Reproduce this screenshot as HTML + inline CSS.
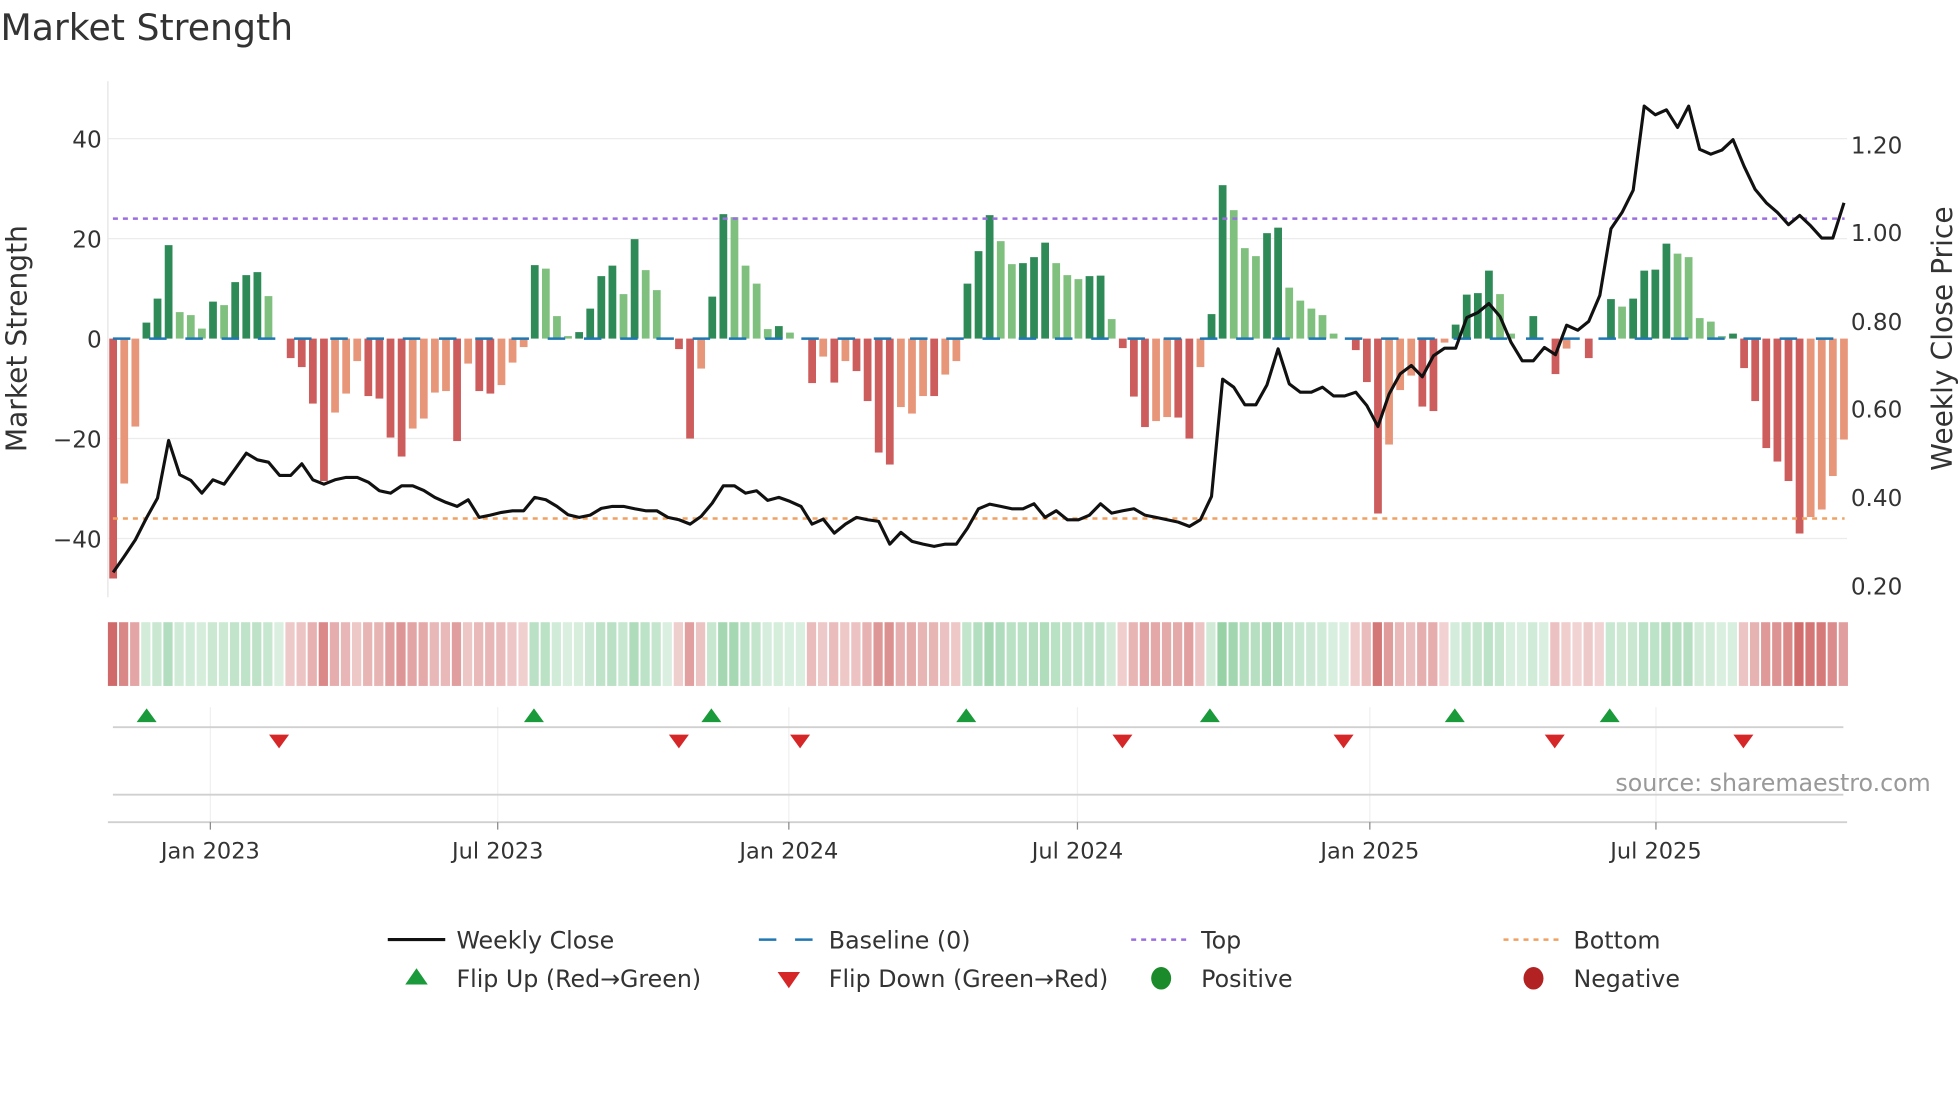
<!DOCTYPE html>
<html><head><meta charset="utf-8"><style>
html,body{margin:0;padding:0;background:#fff;}
svg{display:block;font-family:"DejaVu Sans","Liberation Sans",sans-serif;}
</style></head><body>
<svg id="s" width="1960" height="1102" viewBox="0 0 1568 882" xmlns="http://www.w3.org/2000/svg">
<rect width="1568" height="882" fill="#fff"/>
<text x="0" y="32" font-size="29" fill="#333">Market Strength</text>
<g stroke="#ececec" stroke-width="1">
<line x1="86" y1="111" x2="1478" y2="111"/><line x1="86" y1="191" x2="1478" y2="191"/>
<line x1="86" y1="351" x2="1478" y2="351"/><line x1="86" y1="431" x2="1478" y2="431"/>
</g>
<line x1="86" y1="65" x2="86" y2="478" stroke="#e4e4e4"/>
<g font-size="18.5" fill="#333" text-anchor="end">
<text x="81" y="118">40</text><text x="81" y="198">20</text><text x="81" y="278">0</text>
<text x="81" y="358">−20</text><text x="81" y="438">−40</text>
</g>
<g font-size="18.5" fill="#333">
<text x="1481" y="123">1.20</text><text x="1481" y="193">1.00</text><text x="1481" y="264">0.80</text>
<text x="1481" y="334">0.60</text><text x="1481" y="405">0.40</text><text x="1481" y="476">0.20</text>
</g>
<text transform="translate(21,271) rotate(-90)" font-size="22.5" fill="#333" text-anchor="middle">Market Strength</text>
<text transform="translate(1562,271) rotate(-90)" font-size="22.5" fill="#333" text-anchor="middle">Weekly Close Price</text>
<g id="bars"></g>
<line x1="90" y1="271" x2="1476" y2="271" stroke="#1f77b4" stroke-width="2" stroke-dasharray="14,15"/>
<line x1="90" y1="175" x2="1476" y2="175" stroke="#9b6ee0" stroke-width="2" stroke-dasharray="4,4"/>
<line x1="90" y1="415" x2="1476" y2="415" stroke="#f0a060" stroke-width="2" stroke-dasharray="4,4"/>
<polyline id="price" fill="none" stroke="#111" stroke-width="2.5" stroke-linejoin="round"/>
<g id="strip"></g>
<g stroke="#f0f0f0" stroke-width="1">
<line x1="168" y1="566" x2="168" y2="658"/><line x1="398" y1="566" x2="398" y2="658"/>
<line x1="631" y1="566" x2="631" y2="658"/><line x1="862" y1="566" x2="862" y2="658"/>
<line x1="1096" y1="566" x2="1096" y2="658"/><line x1="1325" y1="566" x2="1325" y2="658"/>
</g>
<line x1="90" y1="582" x2="1475" y2="582" stroke="#d0d0d0" stroke-width="1.5"/>
<line x1="90" y1="636" x2="1475" y2="636" stroke="#d0d0d0" stroke-width="1.5"/>
<line x1="86" y1="658" x2="1478" y2="658" stroke="#d0d0d0" stroke-width="1.5"/>
<g stroke="#888" stroke-width="1">
<line x1="168" y1="658" x2="168" y2="664"/><line x1="398" y1="658" x2="398" y2="664"/>
<line x1="631" y1="658" x2="631" y2="664"/><line x1="862" y1="658" x2="862" y2="664"/>
<line x1="1096" y1="658" x2="1096" y2="664"/><line x1="1325" y1="658" x2="1325" y2="664"/>
</g>
<g id="flips"></g>
<text x="1545" y="633" font-size="19" fill="#999" text-anchor="end">source: sharemaestro.com</text>
<g font-size="18" fill="#333" text-anchor="middle">
<text x="168" y="687">Jan 2023</text><text x="398" y="687">Jul 2023</text><text x="631" y="687">Jan 2024</text>
<text x="862" y="687">Jul 2024</text><text x="1096" y="687">Jan 2025</text><text x="1325" y="687">Jul 2025</text>
</g>
<g font-size="19" fill="#333">
<line x1="310" y1="752" x2="356" y2="752" stroke="#111" stroke-width="2.5"/>
<text x="365" y="759">Weekly Close</text>
<line x1="607" y1="752" x2="651" y2="752" stroke="#1f77b4" stroke-width="2" stroke-dasharray="14,15"/>
<text x="663" y="759">Baseline (0)</text>
<line x1="905" y1="752" x2="949" y2="752" stroke="#9b6ee0" stroke-width="2" stroke-dasharray="4,4"/>
<text x="961" y="759">Top</text>
<line x1="1203" y1="752" x2="1247" y2="752" stroke="#f0a060" stroke-width="2" stroke-dasharray="4,4"/>
<text x="1259" y="759">Bottom</text>
<polygon points="324,788 342,788 333,775" fill="#1a9a3a"/>
<text x="365" y="790">Flip Up (Red→Green)</text>
<polygon points="622,778 640,778 631,791" fill="#d62728"/>
<text x="663" y="790">Flip Down (Green→Red)</text>
<ellipse cx="929" cy="783" rx="8" ry="9" fill="#1a8a2a"/>
<text x="961" y="790">Positive</text>
<ellipse cx="1227" cy="783" rx="8" ry="9" fill="#b22222"/>
<text x="1259" y="790">Negative</text>
</g>
</svg>
<script>
var v=[-48,-29,-17.6,3.2,8,18.7,5.3,4.7,2,7.4,6.7,11.3,12.7,13.3,8.5,0,-3.9,-5.7,-13,-28.5,-14.8,-11,-4.5,-11.5,-12,-19.8,-23.6,-18,-16,-10.8,-10.5,-20.5,-5,-10.5,-11,-9.3,-4.8,-1.7,14.7,14,4.5,0.5,1.3,6,12.5,14.6,8.9,19.9,13.7,9.7,0,-2.1,-20,-6,8.4,24.9,24.3,14.6,11,1.9,2.5,1.2,0,-8.9,-3.6,-8.8,-4.5,-6.5,-12.5,-22.8,-25.2,-13.7,-15,-11.5,-11.5,-7.2,-4.5,11,17.5,24.7,19.5,14.9,15.1,16.3,19.2,15.1,12.7,11.9,12.5,12.6,3.9,-1.9,-11.6,-17.7,-16.5,-15.7,-15.8,-20,-5.7,4.9,30.7,25.7,18.1,16.5,21.1,22.2,10.2,7.6,6,4.7,1,0,-2.3,-8.7,-35,-21.2,-10.3,-7.4,-13.6,-14.5,-0.8,2.8,8.8,9.1,13.6,8.9,1,0,4.5,0,-7.1,-2,0,-3.9,0,7.9,6.4,8,13.6,13.8,19,17,16.3,4.1,3.4,0.5,1,-5.9,-12.5,-21.9,-24.6,-28.5,-39,-35.7,-34.2,-27.5,-20.2];
var d="dlldddllld"+"ldddl0dddd"+"lllddddlll"+"ldlddllldl"+"llddddldll"+"0ddlddllll"+"dl0dldlddd"+"dllldllddd"+"lldddllldd"+"ldddllddld"+"dlllddllll"+"l0dddllldd"+"lddddll0d0"+"dl0d0dlddd"+"dllllldddd"+"dddllll";
var A=[1208,1160,1110,1045,985,812,915,932,970,930,943,897,850,870,877,917,917,882,930,943,930,923,923,937,963,970,948,948,962,983,998,1010,990,1043,1036,1028,1023,1023,983,990,1010,1035,1043,1036,1016,1010,1010,1017,1023,1023,1043,1050,1063,1040,1000,948,948,970,963,992,983,995,1010,1063,1048,1090,1063,1043,1050,1055,1123,1088,1115,1123,1130,1123,1123,1075,1017,1003,1010,1017,1017,1002,1043,1023,1050,1050,1036,1002,1030,1023,1017,1036,1043,1050,1057,1070,1050,980,628,652,705,705,645,537];
var B=[768,790,790,777,800,800,790,825,880,795,742,720,750,695,675,675,595,582,558,592,660,708,708,673,692,615,628,605,537,363,320,262,42,65,52,98,42,155,168,157,130,200,260,295,320,352,328,355,387,387,295];
var ys=A.map(function(y){return 136+y/3.75}).concat(B.map(function(y){return 72+y/3.266}));
var ns="http://www.w3.org/2000/svg";
function el(t,a,p){var e=document.createElementNS(ns,t);for(var k in a)e.setAttribute(k,a[k]);p.appendChild(e);return e;}
var bars=document.getElementById("bars"),strip=document.getElementById("strip");
var pts=[],last=-1;
for(var i=0;i<v.length;i++){
 var x=90.2+8.88*i,val=v[i],c=d[i];
 if(val!==0){
  var col=val>0?(c=="d"?"#2e8b57":"#80c07f"):(c=="d"?"#cd5c5c":"#e8967a");
  var y0=271,y1=271-val*4;
  el("rect",{x:x-3.1,y:Math.min(y0,y1),width:6.2,height:Math.abs(y1-y0),fill:col},bars);
  last=val>0?1:-1;
 }
 var a=0.25+0.6*Math.min(Math.abs(val)/40,1);
 var sc=(val>0||(val===0&&last>0))?"rgba(60,170,90,"+a*0.75+")":"rgba(200,80,80,"+a+")";
 el("rect",{x:x-4.2,y:498,width:7.4,height:51,fill:sc},strip);
 if(i<ys.length)pts.push(x.toFixed(1)+","+ys[i].toFixed(1));
}
document.getElementById("price").setAttribute("points",pts.join(" "));
var f=document.getElementById("flips");
[117,427,569,773,968,1164,1288].forEach(function(x){el("polygon",{points:(x-8)+",578 "+(x+8)+",578 "+x+",567",fill:"#1a9a3a"},f);});
[223,543,640,898,1075,1244,1395].forEach(function(x){el("polygon",{points:(x-8)+",588 "+(x+8)+",588 "+x+",599",fill:"#d62728"},f);});
</script>
</body></html>
